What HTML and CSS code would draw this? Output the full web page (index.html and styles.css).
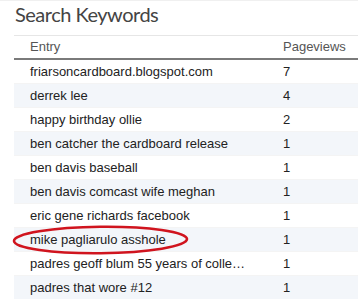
FILE: index.html
```html
<!DOCTYPE html>
<html>
<head>
<meta charset="utf-8">
<link rel="stylesheet" href="styles.css">
</head>
<body>
<div class="panel">
  <h2 class="title">Search Keywords</h2>
  <div class="table">
    <div class="row head"><div class="c1">Entry</div><div class="c2">Pageviews</div></div>
    <div class="row"><div class="c1">friarsoncardboard.blogspot.com</div><div class="c2">7</div></div>
    <div class="row alt"><div class="c1">derrek lee</div><div class="c2">4</div></div>
    <div class="row"><div class="c1">happy birthday ollie</div><div class="c2">2</div></div>
    <div class="row alt"><div class="c1">ben catcher the cardboard release</div><div class="c2">1</div></div>
    <div class="row"><div class="c1">ben davis baseball</div><div class="c2">1</div></div>
    <div class="row alt"><div class="c1">ben davis comcast wife meghan</div><div class="c2">1</div></div>
    <div class="row"><div class="c1">eric gene richards facebook</div><div class="c2">1</div></div>
    <div class="row alt marked"><div class="c1">mike pagliarulo asshole</div><div class="c2">1</div>
      <svg class="circle" width="180" height="34" viewBox="0 0 180 34"><ellipse cx="88.5" cy="16" rx="86.5" ry="13.2" fill="none" stroke="#d0141e" stroke-width="2.6" transform="rotate(-0.6 88.5 16)"/></svg>
    </div>
    <div class="row"><div class="c1">padres geoff blum 55 years of collecting</div><div class="c2">1</div></div>
    <div class="row alt"><div class="c1">padres that wore #12</div><div class="c2">1</div></div>
  </div>
</div>
</body>
</html>
```

FILE: styles.css
```css
html, body {
  margin: 0;
  padding: 0;
  background: #fff;
}
.panel {
  padding-left: 14px;
  border-top: 1px solid #f0f0f0;
  height: 298px;
  overflow: hidden;
}
.title {
  margin: 0;
  height: 34px;
  padding-left: 1px;
  font-family: Lato, "Open Sans", sans-serif;
  font-weight: normal;
  font-size: 20px;
  letter-spacing: -0.5px;
  line-height: 26px;
  color: #444;
}
.table {
  border-top: 1px solid #e6e6e6;
  font-family: "Liberation Sans", Arial, sans-serif;
  font-size: 13px;
  color: #222;
}
.row {
  display: grid;
  grid-template-columns: 255px 1fr;
  height: 24px;
  line-height: 24px;
  position: relative;
  border-bottom: 1px solid #f4f4f4;
  box-sizing: border-box;
}
.row.alt {
  background: #f3f6fa;
}
.row.head {
  height: 24px;
  line-height: 22px;
  border-bottom: 2px solid #7a7a7a;
  color: #555;
}
.c1 {
  padding: 0 18px 0 16px;
  white-space: nowrap;
  overflow: hidden;
  text-overflow: ellipsis;
}
.c2 {
  padding-left: 14px;
}
.circle {
  position: absolute;
  left: -2px;
  top: -4px;
}
```
